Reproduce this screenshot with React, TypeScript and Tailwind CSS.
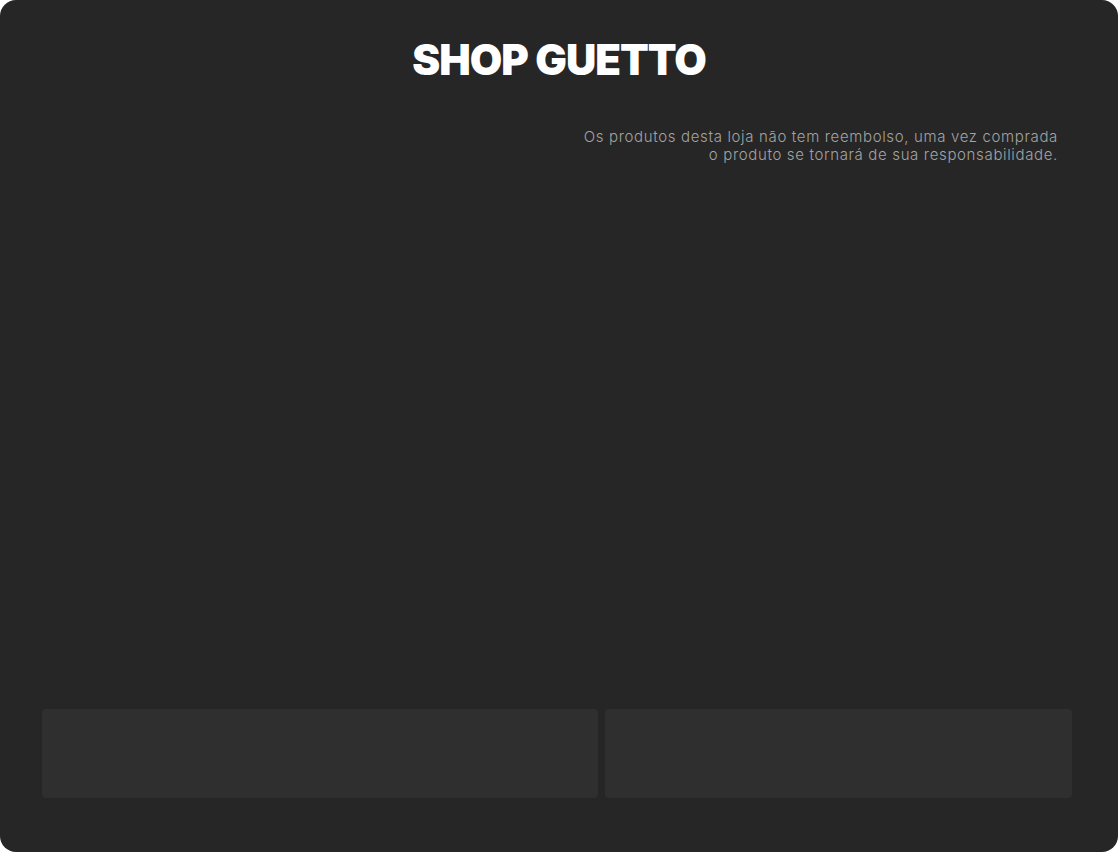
export default function App() {
  return (
    <div className="w-full h-[852px] bg-white">
      <div className="h-full rounded-[16px] bg-[#262626] flex flex-col">
        <div className="pt-[33px] flex justify-center">
          <h1 className="text-[42px] leading-[54px] font-black text-white tracking-[-1px] [font-family:Inter,sans-serif]">
            SHOP GUETTO
          </h1>
        </div>
        <div className="pt-[41px] pr-[60px] flex justify-end">
          <p className="text-right text-[15px] leading-[18px] font-light tracking-[0.65px] text-[#a3a3a3] [font-family:Inter,sans-serif]">
            Os produtos desta loja não tem reembolso, uma vez comprada
            <br />o produto se tornará de sua responsabilidade.
          </p>
        </div>
        <div className="flex-1" />
        <div className="flex gap-[7px] pl-[42px] pr-[46px] pb-[54px]">
          <div className="flex-[556] h-[89px] rounded-[4px] bg-[#2f2f2f]" />
          <div className="flex-[467] h-[89px] rounded-[4px] bg-[#2f2f2f]" />
        </div>
      </div>
    </div>
  );
}
